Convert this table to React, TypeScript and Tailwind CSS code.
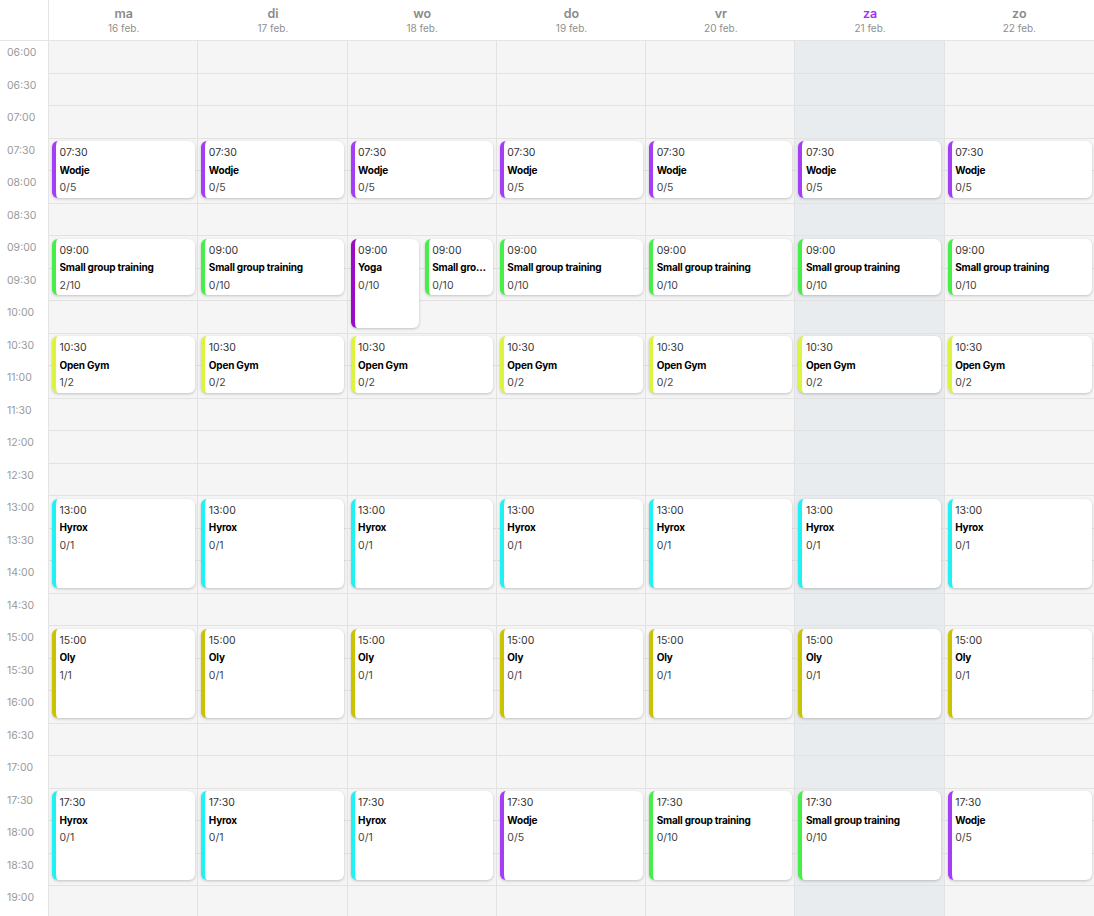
import React from 'react';

type Ev = {
  start: string;
  title: string;
  count: string;
  dur: number; // in half-hours
  color: string;
  col?: number; // 0 or 1 when split
  cols?: number;
};

const ROW = 32.5;
const times = [
  '06:00', '06:30', '07:00', '07:30', '08:00', '08:30', '09:00', '09:30', '10:00',
  '10:30', '11:00', '11:30', '12:00', '12:30', '13:00', '13:30', '14:00', '14:30',
  '15:00', '15:30', '16:00', '16:30', '17:00', '17:30', '18:00', '18:30', '19:00',
];

const C = {
  wodje: '#a53cf6',
  sgt: '#45ef45',
  gym: '#dcf43e',
  hyrox: '#1ef2f2',
  oly: '#c9c300',
  yoga: '#9c0bc6',
};

const wodje = (count = '0/5'): Ev => ({ start: '07:30', title: 'Wodje', count, dur: 2, color: C.wodje });
const sgt = (count = '0/10'): Ev => ({ start: '09:00', title: 'Small group training', count, dur: 2, color: C.sgt });
const gym = (count = '0/2'): Ev => ({ start: '10:30', title: 'Open Gym', count, dur: 2, color: C.gym });
const hyrox = (start: string, count = '0/1'): Ev => ({ start, title: 'Hyrox', count, dur: 3, color: C.hyrox });
const oly = (count = '0/1'): Ev => ({ start: '15:00', title: 'Oly', count, dur: 3, color: C.oly });
const eve = (title: string, count: string, color: string): Ev => ({ start: '17:30', title, count, dur: 3, color });

const days = [
  { name: 'ma', date: '16 feb.', events: [wodje(), sgt('2/10'), gym('1/2'), hyrox('13:00'), oly('1/1'), hyrox('17:30')] },
  { name: 'di', date: '17 feb.', events: [wodje(), sgt(), gym(), hyrox('13:00'), oly(), hyrox('17:30')] },
  {
    name: 'wo',
    date: '18 feb.',
    events: [
      wodje(),
      { start: '09:00', title: 'Yoga', count: '0/10', dur: 3, color: C.yoga, col: 0, cols: 2 },
      { ...sgt(), col: 1, cols: 2 },
      gym(),
      hyrox('13:00'),
      oly(),
      hyrox('17:30'),
    ],
  },
  { name: 'do', date: '19 feb.', events: [wodje(), sgt(), gym(), hyrox('13:00'), oly(), eve('Wodje', '0/5', C.wodje)] },
  { name: 'vr', date: '20 feb.', events: [wodje(), sgt(), gym(), hyrox('13:00'), oly(), eve('Small group training', '0/10', C.sgt)] },
  { name: 'za', date: '21 feb.', today: true, events: [wodje(), sgt(), gym(), hyrox('13:00'), oly(), eve('Small group training', '0/10', C.sgt)] },
  { name: 'zo', date: '22 feb.', events: [wodje(), sgt(), gym(), hyrox('13:00'), oly(), eve('Wodje', '0/5', C.wodje)] },
];

function EventCard({ ev }: { ev: Ev }) {
  const idx = times.indexOf(ev.start);
  const cols = ev.cols ?? 1;
  const col = ev.col ?? 0;
  const style: React.CSSProperties = {
    top: idx * ROW + 2.5,
    height: ev.dur * ROW - 8.5,
    left: `calc(${(col / cols) * 100}% + 3px)`,
    width: `calc(${100 / cols}% - 5.5px)`,
    borderLeftColor: ev.color,
  };
  return (
    <div
      style={style}
      className="absolute rounded-md border-l-4 bg-white pl-[3.5px] pr-1 pt-[3px] shadow-[0_1px_3px_rgba(0,0,0,0.22)] overflow-hidden"
    >
      <div className="text-[10.5px] leading-[17.5px] text-[#333]">{ev.start}</div>
      <div className="truncate text-[10px] font-bold leading-[17.5px] tracking-[-0.2px] text-black">{ev.title}</div>
      <div className="text-[10.5px] leading-[17.5px] text-[#444]">{ev.count}</div>
    </div>
  );
}

export default function App() {
  return (
    <div className="h-[916px] overflow-hidden bg-white font-['Inter',sans-serif]">
      <div className="rounded-tr-xl bg-white">
        {/* header */}
        <div className="flex h-[41px] border-b border-[#e4e4e4]">
          <div className="w-[49px] shrink-0 border-r border-[#e4e4e4]" />
          <div className="grid flex-1 grid-cols-7">
            {days.map(d => (
              <div key={d.name} className="flex flex-col items-center pt-[5px]">
                <div
                  className={
                    'text-[12.5px] font-semibold leading-[17px] ' +
                    (d.today ? 'text-[#a330f5]' : 'text-[#8a8a8a]')
                  }
                >
                  {d.name}
                </div>
                <div className="text-[10px] leading-[12px] text-[#8f8f8f]">{d.date}</div>
              </div>
            ))}
          </div>
        </div>

        {/* body */}
        <div className="flex">
          <div className="w-[49px] shrink-0 border-r border-[#e4e4e4] bg-white">
            {times.map(t => (
              <div key={t} className="h-[32.5px] pl-[7px] pt-[5px] text-[10.5px] leading-[14px] text-[#9a9a9a]">
                {t}
              </div>
            ))}
          </div>
          <div className="grid flex-1 grid-cols-7">
            {days.map((d, i) => (
              <div
                key={d.name}
                className={
                  'relative ' +
                  (i < 6 ? 'border-r border-[#e2e2e2] ' : '') +
                  (d.today ? 'bg-[#e9ecef]' : 'bg-[#f5f5f5]')
                }
              >
                {times.map(t => (
                  <div key={t} className="h-[32.5px] border-b border-[#e2e2e2]" />
                ))}
                {d.events.map((ev, j) => (
                  <EventCard key={j} ev={ev} />
                ))}
              </div>
            ))}
          </div>
        </div>
      </div>
    </div>
  );
}
